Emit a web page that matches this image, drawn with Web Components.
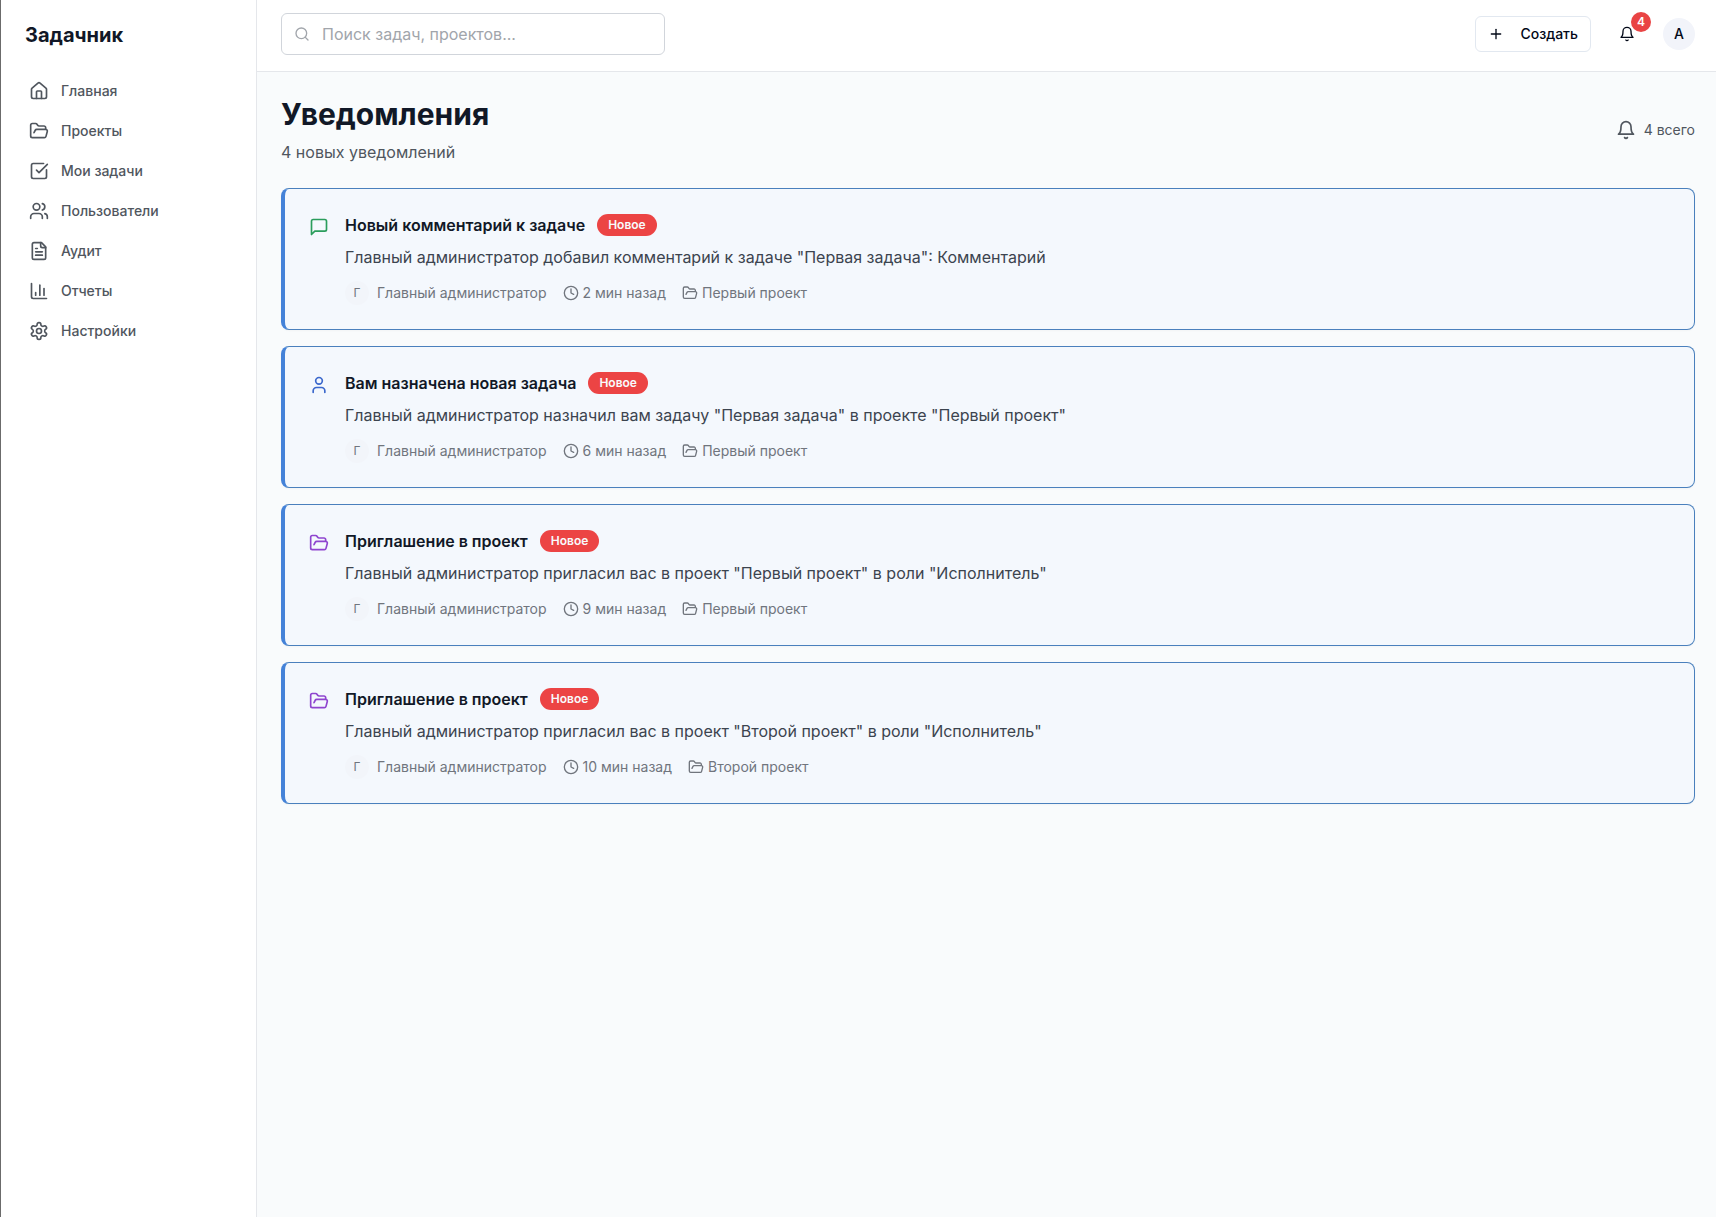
<!DOCTYPE html>
<html lang="ru">
<head>
<meta charset="utf-8">
<meta name="viewport" content="width=device-width, initial-scale=1">
<title>Задачник</title>
<style>
  html, body { margin: 0; min-height: 100%; }
  body { font-family: Inter, "Noto Sans", sans-serif; font-size: 16px; line-height: 24px; color: #020817; background: #f9fbfc; }
</style>
</head>
<body>
<app-shell>
  <app-sidebar slot="sidebar" brand="Задачник">
    <nav-item icon="house">Главная</nav-item>
    <nav-item icon="folder">Проекты</nav-item>
    <nav-item icon="check">Мои задачи</nav-item>
    <nav-item icon="users">Пользователи</nav-item>
    <nav-item icon="file">Аудит</nav-item>
    <nav-item icon="chart">Отчеты</nav-item>
    <nav-item icon="settings">Настройки</nav-item>
  </app-sidebar>
  <app-topbar slot="topbar" count="4" initial="A"></app-topbar>
  <page-heading>
    <span slot="title">Уведомления</span>
    <span slot="subtitle">4 новых уведомлений</span>
    <span slot="total">4 всего</span>
  </page-heading>
  <notification-list>
    <notification-card icon="message" tone="green" author="Главный администратор" time="2 мин назад" project="Первый проект">
      <span slot="title">Новый комментарий к задаче</span>
      Главный администратор добавил комментарий к задаче "Первая задача": Комментарий
    </notification-card>
    <notification-card icon="user" tone="blue" author="Главный администратор" time="6 мин назад" project="Первый проект">
      <span slot="title">Вам назначена новая задача</span>
      Главный администратор назначил вам задачу "Первая задача" в проекте "Первый проект"
    </notification-card>
    <notification-card icon="folder" tone="purple" author="Главный администратор" time="9 мин назад" project="Первый проект">
      <span slot="title">Приглашение в проект</span>
      Главный администратор пригласил вас в проект "Первый проект" в роли "Исполнитель"
    </notification-card>
    <notification-card icon="folder" tone="purple" author="Главный администратор" time="10 мин назад" project="Второй проект">
      <span slot="title">Приглашение в проект</span>
      Главный администратор пригласил вас в проект "Второй проект" в роли "Исполнитель"
    </notification-card>
  </notification-list>
</app-shell>

<script>
const ICONS = {
  house: '<path d="M15 21v-8a1 1 0 0 0-1-1h-4a1 1 0 0 0-1 1v8"/><path d="M3 10a2 2 0 0 1 .709-1.528l7-5.999a2 2 0 0 1 2.582 0l7 5.999A2 2 0 0 1 21 10v9a2 2 0 0 1-2 2H5a2 2 0 0 1-2-2z"/>',
  folder: '<path d="m6 14 1.5-2.9A2 2 0 0 1 9.24 10H20a2 2 0 0 1 1.94 2.5l-1.54 6a2 2 0 0 1-1.95 1.5H4a2 2 0 0 1-2-2V5a2 2 0 0 1 2-2h3.9a2 2 0 0 1 1.69.9l.81 1.2a2 2 0 0 0 1.67.9H18a2 2 0 0 1 2 2v2"/>',
  check: '<path d="M21 10.5V19a2 2 0 0 1-2 2H5a2 2 0 0 1-2-2V5a2 2 0 0 1 2-2h12.5"/><path d="m9 11 3 3L22 4"/>',
  users: '<path d="M16 21v-2a4 4 0 0 0-4-4H6a4 4 0 0 0-4 4v2"/><circle cx="9" cy="7" r="4"/><path d="M22 21v-2a4 4 0 0 0-3-3.87"/><path d="M16 3.13a4 4 0 0 1 0 7.75"/>',
  file: '<path d="M15 2H6a2 2 0 0 0-2 2v16a2 2 0 0 0 2 2h12a2 2 0 0 0 2-2V7Z"/><path d="M14 2v4a2 2 0 0 0 2 2h4"/><path d="M10 9H8"/><path d="M16 13H8"/><path d="M16 17H8"/>',
  chart: '<path d="M3 3v16a2 2 0 0 0 2 2h16"/><path d="M18 17V9"/><path d="M13 17V5"/><path d="M8 17v-3"/>',
  settings: '<path d="M12.22 2h-.44a2 2 0 0 0-2 2v.18a2 2 0 0 1-1 1.73l-.43.25a2 2 0 0 1-2 0l-.15-.08a2 2 0 0 0-2.73.73l-.22.38a2 2 0 0 0 .73 2.73l.15.1a2 2 0 0 1 1 1.72v.51a2 2 0 0 1-1 1.74l-.15.09a2 2 0 0 0-.73 2.73l.22.38a2 2 0 0 0 2.73.73l.15-.08a2 2 0 0 1 2 0l.43.25a2 2 0 0 1 1 1.73V20a2 2 0 0 0 2 2h.44a2 2 0 0 0 2-2v-.18a2 2 0 0 1 1-1.73l.43-.25a2 2 0 0 1 2 0l.15.08a2 2 0 0 0 2.73-.73l.22-.39a2 2 0 0 0-.73-2.73l-.15-.08a2 2 0 0 1-1-1.74v-.5a2 2 0 0 1 1-1.74l.15-.09a2 2 0 0 0 .73-2.73l-.22-.38a2 2 0 0 0-2.73-.73l-.15.08a2 2 0 0 1-2 0l-.43-.25a2 2 0 0 1-1-1.73V4a2 2 0 0 0-2-2z"/><circle cx="12" cy="12" r="3"/>',
  search: '<circle cx="11" cy="11" r="8"/><path d="m21 21-4.3-4.3"/>',
  plus: '<path d="M5 12h14"/><path d="M12 5v14"/>',
  bell: '<path d="M6 8a6 6 0 0 1 12 0c0 7 3 9 3 9H3s3-2 3-9"/><path d="M10.3 21a1.94 1.94 0 0 0 3.4 0"/>',
  message: '<path d="M21 15a2 2 0 0 1-2 2H7l-4 4V5a2 2 0 0 1 2-2h14a2 2 0 0 1 2 2z"/>',
  user: '<path d="M19 21v-2a4 4 0 0 0-4-4H9a4 4 0 0 0-4 4v2"/><circle cx="12" cy="7" r="4"/>',
  clock: '<circle cx="12" cy="12" r="10"/><path d="M12 6v6l4 2"/>'
};

class ShadowElement extends HTMLElement {
  connectedCallback() {
    if (this.shadowRoot) return;
    this.attachShadow({ mode: "open" }).innerHTML = this.render();
  }
  attr(name) { return this.getAttribute(name) || ""; }
}

customElements.define("line-icon", class extends ShadowElement {
  render() {
    return `<style>
      :host { display: block; flex: none; width: 20px; height: 20px; }
      :host([small]) { width: 16px; height: 16px; }
      svg { display: block; width: 100%; height: 100%; }
    </style>
    <svg viewBox="0 0 24 24" fill="none" stroke="currentColor" stroke-width="2" stroke-linecap="round" stroke-linejoin="round" aria-hidden="true">${ICONS[this.attr("name")]}</svg>`;
  }
});

customElements.define("app-shell", class extends ShadowElement {
  render() {
    return `<style>
      :host { display: flex; min-height: 100vh; box-sizing: border-box; border-left: 1px solid #6b6b6b; }
      .column { flex: 1; min-width: 0; display: flex; flex-direction: column; }
      main { padding: 24px 21px 24px 24px; }
    </style>
    <slot name="sidebar"></slot>
    <div class="column"><slot name="topbar"></slot><main><slot></slot></main></div>`;
  }
});

customElements.define("app-sidebar", class extends ShadowElement {
  render() {
    return `<style>
      :host { display: block; flex: none; width: 256px; box-sizing: border-box; background: #fff; border-right: 1px solid #e5e7eb; }
      .brand { padding: 21px 24px; font-size: 20px; line-height: 28px; font-weight: 700; color: #111827; }
      nav { display: flex; flex-direction: column; gap: 4px; padding: 3px 16px; }
    </style>
    <div class="brand">${this.attr("brand")}</div>
    <nav><slot></slot></nav>`;
  }
});

customElements.define("nav-item", class extends ShadowElement {
  render() {
    return `<style>
      :host { display: block; }
      a { display: flex; align-items: center; gap: 12px; padding: 8px 12px; border-radius: 6px; font-size: 14px; line-height: 20px; font-weight: 500; color: #50565e; text-decoration: none; }
      a:hover { background: #f3f4f6; }
    </style>
    <a href="#"><line-icon name="${this.attr("icon")}"></line-icon><span><slot></slot></span></a>`;
  }
});

customElements.define("app-topbar", class extends ShadowElement {
  render() {
    return `<style>
      :host { display: flex; align-items: center; justify-content: space-between; gap: 16px; padding: 13px 21px 16px 24px; background: #fff; border-bottom: 1px solid #e5e7eb; }
      .search { display: flex; align-items: center; gap: 12px; flex: 0 1 384px; box-sizing: border-box; padding: 0 12px; border: 1px solid #d1d5db; border-radius: 6px; background: #fff; color: #a1a5ab; }
      input { flex: 1; min-width: 0; height: 40px; padding: 0; border: 0; outline: 0; background: none; font: inherit; color: #111827; }
      input::placeholder { color: #a1a5ab; opacity: 1; }
      .actions { display: flex; align-items: center; gap: 16px; }
      button { display: flex; align-items: center; justify-content: center; height: 36px; box-sizing: border-box; margin: 0; border: 0; background: none; font: 500 14px/20px Inter, "Noto Sans", sans-serif; color: #020817; cursor: pointer; }
      .create { gap: 16px; padding: 0 12px; border: 1px solid #e2e8f0; border-radius: 6px; background: #fff; }
      .bell { position: relative; padding: 0 12px; }
      .count { position: absolute; top: -4px; right: -4px; width: 20px; height: 20px; border-radius: 10px; background: #e94444; color: #fff; font-size: 12px; font-weight: 600; line-height: 20px; text-align: center; }
      .avatar { width: 32px; height: 32px; padding: 0; border-radius: 16px; background: #f2f4fa; }
    </style>
    <label class="search"><line-icon small name="search"></line-icon><input type="search" aria-label="Поиск" placeholder="Поиск задач, проектов..."></label>
    <div class="actions">
      <button class="create" type="button"><line-icon small name="plus"></line-icon>Создать</button>
      <button class="bell" type="button"><line-icon small name="bell"></line-icon><span class="count">${this.attr("count")}</span></button>
      <button class="avatar" type="button">${this.attr("initial")}</button>
    </div>`;
  }
});

customElements.define("page-heading", class extends ShadowElement {
  render() {
    return `<style>
      :host { display: flex; align-items: center; justify-content: space-between; margin-bottom: 24px; color: #50565e; }
      h1 { margin: 0; font-size: 30px; line-height: 36px; font-weight: 700; color: #111827; }
      p { margin: 8px 0 0; }
      .total { display: flex; align-items: center; gap: 8px; font-size: 14px; line-height: 20px; }
    </style>
    <div><h1><slot name="title"></slot></h1><p><slot name="subtitle"></slot></p></div>
    <div class="total"><line-icon name="bell"></line-icon><slot name="total"></slot></div>`;
  }
});

customElements.define("notification-list", class extends ShadowElement {
  render() {
    return `<style>:host { display: flex; flex-direction: column; gap: 16px; }</style><slot></slot>`;
  }
});

customElements.define("notification-card", class extends ShadowElement {
  render() {
    const author = this.attr("author");
    return `<style>
      :host { display: block; }
      :host([tone="green"]) { --tone: #2a9d5c; }
      :host([tone="blue"]) { --tone: #3b68cc; }
      :host([tone="purple"]) { --tone: #8f45cf; }
      article { display: flex; gap: 16px; padding: 24px; border: 1px solid #4a80bd; border-left: 4px solid #4482d8; border-radius: 8px; background: #f4f8fd; box-shadow: 0 1px 2px rgba(0, 0, 0, 0.03); }
      .kind { margin-top: 4px; color: var(--tone); }
      .body { flex: 1; min-width: 0; }
      header { display: flex; align-items: center; gap: 12px; }
      h2 { margin: 0; font-size: 16px; line-height: 24px; font-weight: 600; color: #111827; }
      .badge { padding: 3px 11px; border-radius: 11px; background: #ec4444; color: #f8fafc; font-size: 12px; line-height: 16px; font-weight: 600; }
      p { margin: 8px 0 12px; color: #3c444f; }
      .meta { display: flex; align-items: center; gap: 16px; font-size: 14px; line-height: 20px; color: #70757d; }
      .meta > span { display: flex; align-items: center; gap: 4px; }
      .meta > .author { gap: 8px; }
      .initial { width: 24px; border-radius: 12px; background: #f2f5fa; font-size: 12px; line-height: 24px; text-align: center; }
    </style>
    <article>
      <line-icon class="kind" name="${this.attr("icon")}"></line-icon>
      <div class="body">
        <header><h2><slot name="title"></slot></h2><span class="badge">Новое</span></header>
        <p><slot></slot></p>
        <div class="meta">
          <span class="author"><span class="initial">${author.charAt(0)}</span>${author}</span>
          <span><line-icon small name="clock"></line-icon>${this.attr("time")}</span>
          <span><line-icon small name="folder"></line-icon>${this.attr("project")}</span>
        </div>
      </div>
    </article>`;
  }
});
</script>
</body>
</html>
